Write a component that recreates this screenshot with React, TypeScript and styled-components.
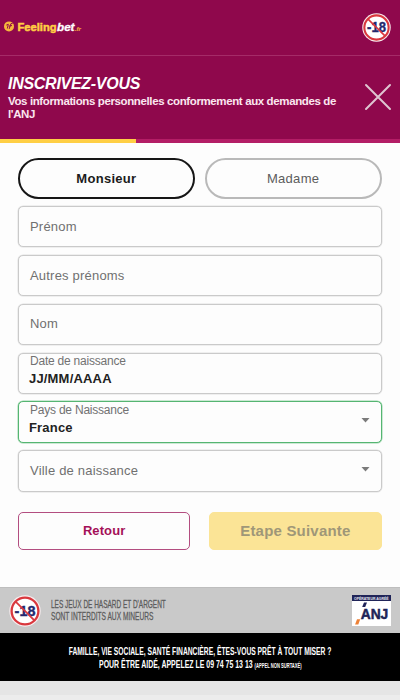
import React from "react";
import styled, { createGlobalStyle } from "styled-components";

const Global = createGlobalStyle`
  * { box-sizing: border-box; }
  html, body { margin: 0; padding: 0; }
  body { background: #fdfdfd; font-family: "Liberation Sans", Arial, sans-serif; overflow: hidden; }
  button { font-family: inherit; padding: 0; cursor: pointer; }
  svg { overflow: visible; }
`;

const Page = styled.div`
  width: 400px;
  height: 700px;
  display: flex;
  flex-direction: column;
  overflow: hidden;
  background: #fdfdfd;
`;

const TopBar = styled.header`
  height: 56px;
  flex: none;
  display: flex;
  align-items: center;
  justify-content: space-between;
  padding: 0 9px 1px 3px;
  background: #8f084c;
  border-bottom: 1px solid #a52b68;
`;

const Hero = styled.section`
  height: 83px;
  flex: none;
  display: flex;
  justify-content: space-between;
  padding: 17px 8px 0 8px;
  background: #8f084c;
  color: #fbe6ef;
`;

const Title = styled.h1`
  margin: 0 0 1px;
  font-size: 16px;
  line-height: 21px;
  font-style: italic;
  font-weight: 700;
  letter-spacing: -0.28px;
  color: #fff;
`;

const Subtitle = styled.p`
  margin: 0;
  font-size: 11.5px;
  line-height: 13px;
  font-weight: 700;
  width: 335px;
  letter-spacing: -0.38px;
`;

const CloseButton = styled.button`
  width: 28px;
  height: 28px;
  margin-top: 10px;
  border: 0;
  background: none;
  svg { display: block; }
`;

const Progress = styled.div`
  height: 4px;
  flex: none;
  background: #b31e66;
`;

const ProgressValue = styled.div`
  width: 34%;
  height: 100%;
  background: #ffcf45;
`;

const Form = styled.main`
  height: 444px;
  flex: none;
  padding: 15px 18.5px 0 18px;
`;

const GenderRow = styled.div`
  display: flex;
  gap: 10px;
  margin-bottom: 7.4px;
`;

const Pill = styled.button<{ $active?: boolean }>`
  flex: 1;
  height: 40.5px;
  border-radius: 21px;
  background: #fdfdfd;
  border: 2px solid ${(p) => (p.$active ? "#161616" : "#b9b9b9")};
  color: ${(p) => (p.$active ? "#1b1b1b" : "#5c5c5c")};
  font-size: 13px;
  font-weight: ${(p) => (p.$active ? 700 : 400)};
  letter-spacing: 0.3px;
`;

const Fields = styled.div`
  display: flex;
  flex-direction: column;
  gap: 7.4px;
`;

const FieldBox = styled.label<{ $valid?: boolean }>`
  height: 41.5px;
  display: flex;
  align-items: center;
  justify-content: space-between;
  padding: 0 11px 0 10px;
  border: 1px solid ${(p) => (p.$valid ? "#55b572" : "#cacaca")};
  box-shadow: 0 0 0 0.5px ${(p) => (p.$valid ? "#9bd6ab" : "#e2e2e2")};
  border-radius: 5px;
  background: #fdfdfd;
`;

const FieldText = styled.span`
  display: flex;
  flex-direction: column;
  margin-top: -5px;
`;

const Placeholder = styled.span`
  padding-left: 1px;
  font-size: 13px;
  line-height: 16px;
  letter-spacing: 0.2px;
  color: #707070;
`;

const FieldLabel = styled.span`
  padding-left: 1px;
  font-size: 12px;
  line-height: 15px;
  letter-spacing: -0.22px;
  color: #727272;
`;

const FieldValue = styled.span`
  margin-top: 1px;
  font-size: 13px;
  line-height: 17px;
  font-weight: 700;
  letter-spacing: 0.18px;
  color: #222;
`;

const Caret = styled.svg`
  margin-top: -3px;
`;

const Actions = styled.div`
  display: flex;
  gap: 19px;
  margin-top: 20px;
`;

const ActionButton = styled.button<{ $primary?: boolean }>`
  flex: 1;
  height: 38px;
  border-radius: 5px;
  font-weight: 700;
  border: 1px solid ${(p) => (p.$primary ? "#fbe496" : "#b34d80")};
  background: ${(p) => (p.$primary ? "#fbe496" : "#fdfdfd")};
  color: ${(p) => (p.$primary ? "#9f9778" : "#a41058")};
  font-size: ${(p) => (p.$primary ? "15px" : "13px")};
  letter-spacing: ${(p) => (p.$primary ? "0.2px" : "0.1px")};
`;

const LegalBar = styled.section`
  height: 46px;
  flex: none;
  display: flex;
  align-items: center;
  padding: 0 9px;
  background: #c9c9c9;
  border-top: 1px solid #bebebe;
`;

const LegalText = styled.div`
  flex: 1;
  margin-left: 10px;
  color: #5c5c5c;
  font-size: 11.5px;
  line-height: 11.5px;
  -webkit-text-stroke: 0.3px #5c5c5c;
`;

const Condensed = styled.span<{ $scale: number; $origin?: string }>`
  display: block;
  width: max-content;
  white-space: nowrap;
  transform: scaleX(${(p) => p.$scale});
  transform-origin: ${(p) => p.$origin ?? "left"} center;
`;

const HelpBar = styled.section`
  height: 48px;
  flex: none;
  display: flex;
  flex-direction: column;
  align-items: center;
  padding-top: 12px;
  background: #000;
  color: #fff;
  font-weight: 700;
  font-size: 11px;
  line-height: 13px;
`;

const Small = styled.small`
  font-size: 6.5px;
`;

const Tail = styled.div`
  flex: 1;
  background: #e5e5e5;
  border-bottom: 5px solid #ececec;
`;

const Logo = () => (
  <svg width="80" height="18" viewBox="0 0 80 18" role="img" aria-label="Feelingbet.fr">
    <circle cx="6" cy="8.4" r="5" fill="#f6b83c" />
    <path d="M3.3 7.1l2-.8-1 4.2M6.2 10.9l1.7-5.2 1.8-.4M5.8 8.2l3.2-.7" fill="none" stroke="#8f084c" strokeWidth="1" />
    <g fontFamily="Liberation Sans, Arial, sans-serif" fontWeight="700" fontSize="10">
      <text x="14.5" y="12.6" fill="#ffcf43" stroke="#ffcf43" strokeWidth=".45" textLength="39" lengthAdjust="spacingAndGlyphs">Feeling</text>
      <text x="54" y="12.6" fill="#fff" stroke="#fff" strokeWidth=".3" fontStyle="italic" textLength="17.5" lengthAdjust="spacingAndGlyphs">bet</text>
      <text x="71.8" y="12.6" fill="#f0a83e" stroke="#f0a83e" strokeWidth=".2" fontStyle="italic" fontSize="6" textLength="6" lengthAdjust="spacingAndGlyphs">.fr</text>
    </g>
  </svg>
);

const AgeBadge = ({ size }: { size: number }) => (
  <svg width={size} height={size} viewBox="0 0 32 32" role="img" aria-label="-18">
    <circle cx="16" cy="16" r="15.7" fill="#f8eef0" />
    <circle cx="16" cy="16" r="13.4" fill="#fff" stroke="#d9383e" strokeWidth="2.3" />
    <text x="5.6" y="21.2" fontFamily="Liberation Sans, Arial, sans-serif" fontWeight="700" fontSize="15.5" fill="#24286e" stroke="#24286e" strokeWidth=".4" textLength="20.8" lengthAdjust="spacingAndGlyphs">-18</text>
    <path d="M6.4 6.4L25.6 25.6" stroke="#d9383e" strokeWidth="1.8" />
  </svg>
);

const AnjLogo = () => (
  <svg width="39" height="31" viewBox="0 0 39 31" role="img" aria-label="Opérateur agréé ANJ">
    <rect width="39" height="31" fill="#fff" />
    <rect width="39" height="6" fill="#202458" />
    <text x="2" y="4.7" fontFamily="Liberation Sans, Arial, sans-serif" fontWeight="700" fontSize="4" fill="#e5e5ef" textLength="34.5" lengthAdjust="spacingAndGlyphs">OPÉRATEUR AGRÉÉ</text>
    <path d="M12 7.6h3L13.2 12h-3z" fill="#202458" />
    <path d="M5 24.3h3.2l-1.9 5.2H3.1z" fill="#ed8137" />
    <text x="8.7" y="23.6" fontFamily="Liberation Sans, Arial, sans-serif" fontWeight="700" fontSize="14.5" fill="#202458" stroke="#202458" strokeWidth=".5" textLength="27.6" lengthAdjust="spacingAndGlyphs">ANJ</text>
  </svg>
);

type FieldProps = { label: string; value?: string; select?: boolean; valid?: boolean };

const Field = ({ label, value, select, valid }: FieldProps) => (
  <FieldBox $valid={valid}>
    {value ? (
      <FieldText>
        <FieldLabel>{label}</FieldLabel>
        <FieldValue>{value}</FieldValue>
      </FieldText>
    ) : (
      <Placeholder>{label}</Placeholder>
    )}
    {select && (
      <Caret width="9" height="5" viewBox="0 0 9 5">
        <path d="M.5 0h8l-4 4.5z" fill="#7b7b7b" />
      </Caret>
    )}
  </FieldBox>
);

export default function App() {
  return (
    <>
      <Global />
      <Page>
        <TopBar>
          <Logo />
          <AgeBadge size={29} />
        </TopBar>
        <Hero>
          <div>
            <Title>INSCRIVEZ-VOUS</Title>
            <Subtitle>Vos informations personnelles conformement aux demandes de l'ANJ</Subtitle>
          </div>
          <CloseButton aria-label="Fermer">
            <svg width="28" height="28" viewBox="0 0 28 28">
              <path d="M2 2L26 26M26 2L2 26" stroke="#dfc5d1" strokeWidth="2" strokeLinecap="round" />
            </svg>
          </CloseButton>
        </Hero>
        <Progress>
          <ProgressValue />
        </Progress>
        <Form>
          <GenderRow>
            <Pill $active>Monsieur</Pill>
            <Pill>Madame</Pill>
          </GenderRow>
          <Fields>
            <Field label="Prénom" />
            <Field label="Autres prénoms" />
            <Field label="Nom" />
            <Field label="Date de naissance" value="JJ/MM/AAAA" />
            <Field label="Pays de Naissance" value="France" select valid />
            <Field label="Ville de naissance" select />
          </Fields>
          <Actions>
            <ActionButton>Retour</ActionButton>
            <ActionButton $primary>Etape Suivante</ActionButton>
          </Actions>
        </Form>
        <LegalBar>
          <AgeBadge size={32} />
          <LegalText>
            <Condensed $scale={0.563}>LES JEUX DE HASARD ET D'ARGENT</Condensed>
            <Condensed $scale={0.575}>SONT INTERDITS AUX MINEURS</Condensed>
          </LegalText>
          <AnjLogo />
        </LegalBar>
        <HelpBar>
          <Condensed $scale={0.611} $origin="center">FAMILLE, VIE SOCIALE, SANTÉ FINANCIÈRE, ÊTES-VOUS PRÊT À TOUT MISER ?</Condensed>
          <Condensed $scale={0.632} $origin="center">
            POUR ÊTRE AIDÉ, APPELEZ LE 09 74 75 13 13 <Small>(APPEL NON SURTAXÉ)</Small>
          </Condensed>
        </HelpBar>
        <Tail />
      </Page>
    </>
  );
}
